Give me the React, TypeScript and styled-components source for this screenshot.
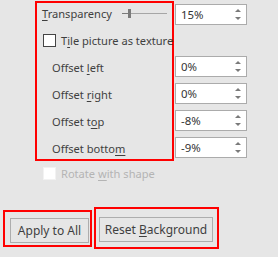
import React from "react";
import styled, { createGlobalStyle } from "styled-components";

const GlobalStyle = createGlobalStyle`
  body {
    margin: 0;
    background: #e6e6e6;
    font-family: "Noto Sans", "Open Sans", sans-serif;
    font-size: 11.1px;
    color: #3f3f3f;
  }
`;

const Page = styled.div`
  width: 278px;
  height: 257px;
  display: flex;
  flex-direction: column;
`;

const TopSection = styled.div`
  display: flex;
  padding-left: 35px;
`;

const Highlight = styled.div`
  border: 2px solid #ff0000;
  box-sizing: border-box;
`;

const OptionsBox = styled(Highlight)`
  width: 139px;
  height: 160px;
  margin-top: 1px;
`;

const Rows = styled.div`
  margin-top: -3px;
  display: flex;
  flex-direction: column;
`;

const Row = styled.div<{ $indent: number }>`
  height: 27px;
  display: flex;
  align-items: center;
  padding-left: ${(p) => p.$indent}px;
  white-space: nowrap;
`;

const Key = styled.span`
  text-decoration: underline;
  text-underline-offset: 2px;
`;

const Slider = styled.div`
  position: relative;
  margin-left: auto;
  margin-right: 5px;
  width: 45px;
  height: 9px;
  display: flex;
  align-items: center;
`;

const Track = styled.div`
  flex: 1;
  height: 1px;
  background: linear-gradient(to right, #7a7a7a 0 6px, #a6a6a6 6px);
`;

const Thumb = styled.div`
  position: absolute;
  left: 6px;
  top: 0;
  width: 3px;
  height: 9px;
  background: #7a7a7a;
`;

const CheckBox = styled.span<{ $disabled?: boolean }>`
  width: 11px;
  height: 11px;
  border: 1px solid ${(p) => (p.$disabled ? "#f2f2f2" : "#444444")};
  background: #ffffff;
  margin-right: 5px;
  flex-shrink: 0;
`;

const SpinColumn = styled.div`
  display: flex;
  flex-direction: column;
  gap: 6px;
  margin-left: 1px;
  padding-top: 4px;
`;

const SpinBox = styled.div<{ $gapBefore?: number }>`
  width: 72px;
  height: 21px;
  box-sizing: border-box;
  border: 1px solid #ababab;
  background: #ffffff;
  display: flex;
  align-items: center;
  justify-content: space-between;
  padding-left: 5px;
  padding-right: 5px;
  margin-top: ${(p) => p.$gapBefore ?? 0}px;
  color: #333333;
  font-size: 11.4px;
`;

const Arrows = styled.div`
  display: flex;
  flex-direction: column;
  justify-content: space-between;
  height: 11px;
`;

const Arrow = styled.span<{ $up?: boolean }>`
  width: 0;
  height: 0;
  border-left: 3px solid transparent;
  border-right: 3px solid transparent;
  ${(p) =>
    p.$up
      ? "border-bottom: 3px solid #7a7a7a;"
      : "border-top: 3px solid #7a7a7a;"}
`;

const DisabledRow = styled.div`
  height: 24px;
  display: flex;
  align-items: center;
  padding-left: 43px;
  color: #b4b4b4;
`;

const ButtonBar = styled.div`
  display: flex;
  align-items: center;
  gap: 2px;
  margin-top: 22px;
  padding-left: 3px;
`;

const ApplyFrame = styled(Highlight)`
  width: 89px;
  height: 37px;
  display: flex;
  align-items: flex-end;
  padding: 0 0 2px 5px;
`;

const ResetFrame = styled(Highlight)`
  width: 125px;
  height: 42px;
  display: flex;
  align-items: flex-start;
  padding: 8px 0 0 3px;
`;

const Button = styled.div<{ $width: number }>`
  width: ${(p) => p.$width}px;
  height: 25px;
  box-sizing: border-box;
  border: 1px solid #adadad;
  background: #e6e6e6;
  display: flex;
  align-items: center;
  justify-content: center;
  color: #3f3f3f;
  font-size: 12px;
`;

const spins = [
  { value: "15%", gap: 0 },
  { value: "0%", gap: 25 },
  { value: "0%", gap: 0 },
  { value: "-8%", gap: 0 },
  { value: "-9%", gap: 0 },
];

const Spin: React.FC<{ value: string; gap: number }> = ({ value, gap }) => (
  <SpinBox $gapBefore={gap}>
    <span>{value}</span>
    <Arrows>
      <Arrow $up />
      <Arrow />
    </Arrows>
  </SpinBox>
);

export default function App() {
  return (
    <Page>
      <GlobalStyle />
      <TopSection>
        <OptionsBox>
          <Rows>
            <Row $indent={5}>
              <span>
                <Key>T</Key>ransparency
              </span>
              <Slider>
                <Track />
                <Thumb />
              </Slider>
            </Row>
            <Row $indent={6}>
              <CheckBox />
              <span>
                T<Key>i</Key>le picture as texture
              </span>
            </Row>
            <Row $indent={15}>
              <span>
                Offset <Key>l</Key>eft
              </span>
            </Row>
            <Row $indent={15}>
              <span>
                Offset <Key>r</Key>ight
              </span>
            </Row>
            <Row $indent={15}>
              <span>
                Offset t<Key>o</Key>p
              </span>
            </Row>
            <Row $indent={15}>
              <span>
                Offset botto<Key>m</Key>
              </span>
            </Row>
          </Rows>
        </OptionsBox>
        <SpinColumn>
          {spins.map((s, i) => (
            <Spin key={i} value={s.value} gap={s.gap} />
          ))}
        </SpinColumn>
      </TopSection>
      <DisabledRow>
        <CheckBox $disabled />
        <span>
          Rotate <Key>w</Key>ith shape
        </span>
      </DisabledRow>
      <ButtonBar>
        <ApplyFrame>
          <Button $width={79}>Apply to All</Button>
        </ApplyFrame>
        <ResetFrame>
          <Button $width={114}>
            <span>
              Reset <Key>B</Key>ackground
            </span>
          </Button>
        </ResetFrame>
      </ButtonBar>
    </Page>
  );
}
